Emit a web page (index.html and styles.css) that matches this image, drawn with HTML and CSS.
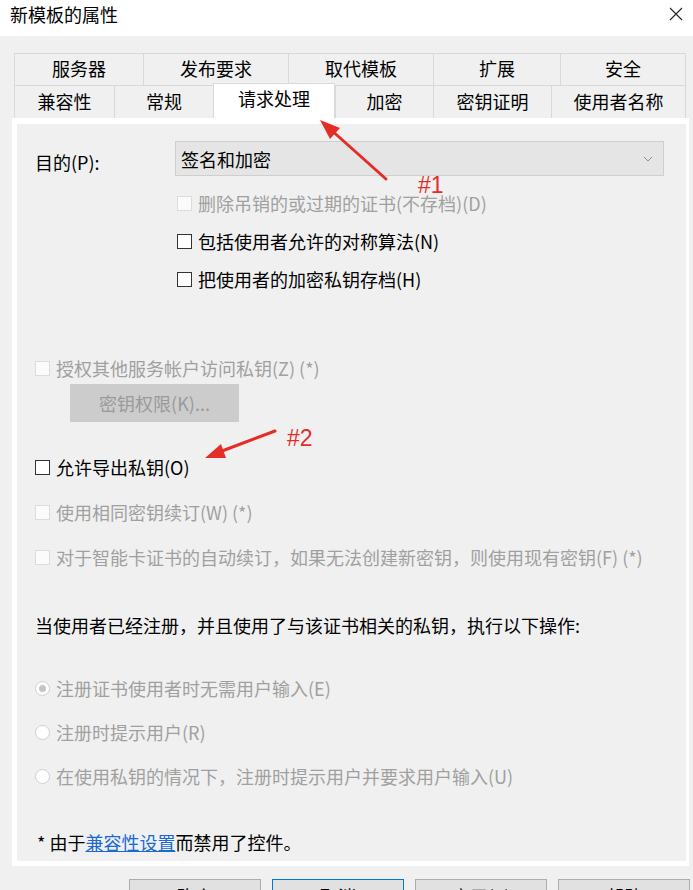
FILE: index.html
```html
<!DOCTYPE html>
<html lang="zh-CN">
<head>
  <meta charset="UTF-8" />
  <title>新模板的属性</title>
  <link rel="stylesheet" href="styles.css">
</head>
<body>
  <div class="titlebar">
    <h1>新模板的属性</h1>
    <svg class="close" width="14" height="14" viewBox="0 0 14 14">
      <path d="M1 1 L13 13 M13 1 L1 13" stroke="#222" stroke-width="1.1" fill="none"/>
    </svg>
  </div>

  <div class="tabs">
    <div class="tab-row tab-row-top">
      <div class="tab">服务器</div>
      <div class="tab">发布要求</div>
      <div class="tab">取代模板</div>
      <div class="tab">扩展</div>
      <div class="tab">安全</div>
    </div>
    <div class="tab-row tab-row-bottom">
      <div class="tab">兼容性</div>
      <div class="tab">常规</div>
      <div class="tab active">请求处理</div>
      <div class="tab">加密</div>
      <div class="tab">密钥证明</div>
      <div class="tab">使用者名称</div>
    </div>
  </div>

  <div class="page">
    <div class="page-inner">
      <div class="purpose">
        <label>目的(P):</label>
        <div class="select">
          <span>签名和加密</span>
          <svg width="10" height="6" viewBox="0 0 10 6">
            <path d="M1 1 L5 5 L9 1" stroke="#8a8a8a" stroke-width="1" fill="none"/>
          </svg>
        </div>
      </div>

      <div class="sub-options">
        <div class="option disabled"><span class="box"></span>删除吊销的或过期的证书(不存档)(D)</div>
        <div class="option"><span class="box"></span>包括使用者允许的对称算法(N)</div>
        <div class="option"><span class="box"></span>把使用者的加密私钥存档(H)</div>
      </div>

      <div class="option disabled key-access"><span class="box"></span>授权其他服务帐户访问私钥(Z) (*)</div>
      <button class="key-button" disabled>密钥权限(K)...</button>

      <div class="option export"><span class="box"></span>允许导出私钥(O)</div>
      <div class="option disabled renew"><span class="box"></span>使用相同密钥续订(W) (*)</div>
      <div class="option disabled renew"><span class="box"></span>对于智能卡证书的自动续订，如果无法创建新密钥，则使用现有密钥(F) (*)</div>

      <p class="enroll-title">当使用者已经注册，并且使用了与该证书相关的私钥，执行以下操作:</p>
      <div class="enroll-options">
        <div class="option disabled"><span class="radio checked"></span>注册证书使用者时无需用户输入(E)</div>
        <div class="option disabled"><span class="radio"></span>注册时提示用户(R)</div>
        <div class="option disabled"><span class="radio"></span>在使用私钥的情况下，注册时提示用户并要求用户输入(U)</div>
      </div>

      <p class="footnote">* 由于<a href="#">兼容性设置</a>而禁用了控件。</p>
    </div>
  </div>

  <div class="actions">
    <button>确定</button>
    <button class="primary">取消</button>
    <button>应用(A)</button>
    <button>帮助</button>
  </div>

  <!-- red annotation marks drawn over the dialog -->
  <svg class="annotations" width="693" height="890" viewBox="0 0 693 890">
    <line x1="386" y1="179" x2="334" y2="132.5" stroke="#e52d27" stroke-width="3" stroke-linecap="round"/>
    <polygon points="320,120 340,128 330,139" fill="#e52d27"/>
    <line x1="275" y1="431" x2="222" y2="451" stroke="#e52d27" stroke-width="3" stroke-linecap="round"/>
    <polygon points="205,458 221,444 226,458" fill="#e52d27"/>
  </svg>
  <span class="mark mark-1">#1</span>
  <span class="mark mark-2">#2</span>
</body>
</html>
```

FILE: styles.css
```css
:root {
  --face: #f0f0f0;
  --white: #ffffff;
  --tab-line: #d9d9d9;
  --disabled: #a0a0a0;
  --red: #e52d27;
}

* {
  box-sizing: border-box;
  margin: 0;
  padding: 0;
}

body {
  position: relative;
  width: 693px;
  height: 890px;
  overflow: hidden;
  background-color: var(--face);
  font-family: "Noto Sans CJK SC", sans-serif;
  font-size: 18px;
  color: #000;
}

.titlebar {
  height: 36px;
  background-color: var(--white);
  display: flex;
  justify-content: space-between;
  align-items: center;
  padding: 0 10px 8px 10px;
}

.titlebar h1 {
  font-size: 18px;
  font-weight: normal;
  line-height: 24px;
}

.tabs {
  margin: 17px 0 0 14px;
  width: 672px;
}

.tab-row {
  display: grid;
}

.tab-row-top {
  grid-template-columns: 129px 145px 145px 127px 126px;
  height: 32px;
}

.tab-row-bottom {
  grid-template-columns: 100px 99px 122px 98px 118px 135px;
  height: 33px;
}

.tab {
  display: flex;
  align-items: center;
  justify-content: center;
  padding-bottom: 3px;
  line-height: 24px;
  border-top: 1px solid var(--tab-line);
  border-left: 1px solid var(--tab-line);
  background-color: var(--face);
}

.tab:last-child {
  border-right: 1px solid var(--tab-line);
}

.tab.active {
  position: relative;
  z-index: 1;
  margin-top: -2px;
  padding-bottom: 7px;
  background-color: var(--white);
  border-right: 1px solid var(--tab-line);
}

.page {
  margin-left: 12px;
  width: 677px;
  height: 748px;
  background-color: var(--white);
  padding: 6px 3px 5px 5px;
}

.page-inner {
  height: 100%;
  background-color: var(--face);
  padding: 17px 0 0 18px;
}

.purpose {
  display: flex;
  height: 35px;
}

.purpose label {
  width: 140px;
  padding-top: 9px;
  line-height: 24px;
}

.select {
  width: 489px;
  height: 35px;
  display: flex;
  align-items: center;
  justify-content: space-between;
  padding: 0 10px 0 5px;
  line-height: 24px;
  background-color: #e5e5e5;
  border: 1px solid #cfcfcf;
}

.sub-options {
  margin: 15px 0 0 142px;
  display: flex;
  flex-direction: column;
  gap: 14px;
}

.option {
  display: flex;
  align-items: center;
  gap: 6px;
  line-height: 24px;
}

.box {
  flex: none;
  width: 15px;
  height: 15px;
  border: 1px solid #333;
  background-color: var(--white);
}

.radio {
  flex: none;
  position: relative;
  width: 15px;
  height: 15px;
  border-radius: 50%;
  border: 1px solid #d0d0d0;
  background-color: var(--white);
}

.radio.checked::after {
  content: "";
  position: absolute;
  left: 3px;
  top: 3px;
  width: 7px;
  height: 7px;
  border-radius: 50%;
  background-color: #c4c4c4;
}

.option.disabled {
  color: var(--disabled);
}

.option.disabled .box {
  border-color: #dcdcdc;
  background-color: #fbfbfb;
}

.key-access {
  margin-top: 65px;
}

.key-button {
  display: block;
  margin: 4px 0 0 35px;
  width: 169px;
  height: 38px;
  border: none;
  background-color: #cccccc;
  color: #9a9a9a;
  font: inherit;
}

.export {
  margin-top: 33px;
}

.renew {
  margin-top: 21px;
}

.enroll-title {
  margin-top: 44px;
  line-height: 24px;
}

.enroll-options {
  margin-top: 39px;
  display: flex;
  flex-direction: column;
  gap: 20px;
}

.footnote {
  margin-top: 42px;
  padding-left: 2px;
  line-height: 24px;
}

.footnote a {
  color: #1a6ad2;
  text-decoration: underline;
}

.actions {
  display: flex;
  justify-content: flex-end;
  gap: 11px;
  margin-top: 13px;
  padding-right: 3px;
}

.actions button {
  width: 132px;
  height: 34px;
  background-color: #e1e1e1;
  border: 1px solid #adadad;
  font: inherit;
  line-height: 24px;
  color: #000;
}

.actions button.primary {
  border-color: #0078d7;
}

.annotations {
  position: absolute;
  left: 0;
  top: 0;
  z-index: 2;
  pointer-events: none;
}

.mark {
  position: absolute;
  z-index: 3;
  color: var(--red);
  font-family: "Liberation Sans", sans-serif;
  font-size: 23px;
  line-height: 23px;
}

.mark-1 {
  left: 418px;
  top: 174px;
}

.mark-2 {
  left: 287px;
  top: 427px;
}
```
